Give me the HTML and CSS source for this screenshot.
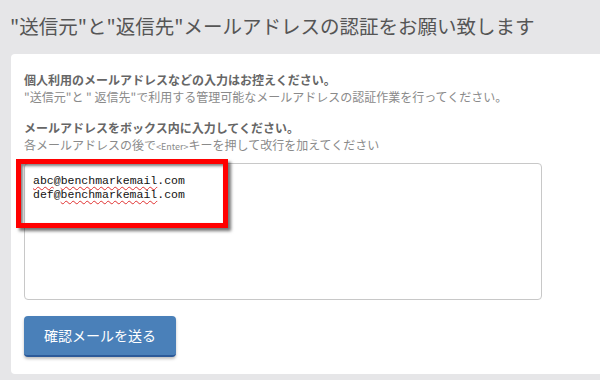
FILE: index.html
```html
<!DOCTYPE html>
<html>
<head>
    <meta charset="UTF-8">
    <title>メールアドレスの認証</title>
    <link rel="stylesheet" href="styles.css">
</head>
<body>

<h1 class="title">"送信元"と"返信先"メールアドレスの認証をお願い致します</h1>

<div class="card">
    <div class="note">
        <p class="note-head">個人利用のメールアドレスなどの入力はお控えください。</p>
        <p class="note-text">"送信元"と " 返信先"で利用する管理可能なメールアドレスの認証作業を行ってください。</p>
    </div>
    <div class="note">
        <p class="note-head">メールアドレスをボックス内に入力してください。</p>
        <p class="note-text">各メールアドレスの後で<span class="key">&lt;Enter&gt;</span>キーを押して改行を加えてください</p>
    </div>

    <div class="field-wrap">
        <div class="field">
            <div><span class="typo">abc</span>@<span class="typo">benchmarkemail</span>.com</div>
            <div>def@<span class="typo">benchmarkemail</span>.com</div>
        </div>
        <div class="mark"></div>
    </div>

    <div class="btn">確認メールを送る</div>
</div>

</body>
</html>
```

FILE: styles.css
```css
body {
    margin: 0;
    background: #e6e6e8;
    font-family: "Noto Sans CJK JP", "Noto Sans", sans-serif;
    color: #555555;
}

.title {
    margin: 0;
    padding: 12px 0 14px 10px;
    font-size: 19.5px;
    line-height: 28px;
    font-weight: 400;
    color: #555555;
    white-space: nowrap;
}

.card {
    margin-left: 11px;
    padding: 17px 13px 17px 13px;
    background: #ffffff;
    border-radius: 4px 0 0 4px;
}

.note {
    margin-bottom: 14px;
}

.note p {
    margin: 0;
    font-size: 12px;
    line-height: 17px;
    white-space: nowrap;
}

.note-head {
    font-weight: 700;
    color: #666666;
}

.note-text {
    color: #8a8a8a;
}

.key {
    font-size: 9px;
}

.field-wrap {
    position: relative;
    width: 518px;
    margin-top: -6px;
}

.field {
    height: 117px;
    padding: 10px 8px 8px 8px;
    border: 1px solid #c8c8c8;
    border-radius: 4px;
    font-family: "Liberation Mono", "DejaVu Sans Mono", monospace;
    font-size: 11.5px;
    line-height: 14px;
    color: #111111;
}

.typo {
    text-decoration: underline wavy #e03030;
    text-decoration-thickness: 1px;
    text-underline-offset: 2px;
}

.mark {
    position: absolute;
    left: -8px;
    top: -4px;
    width: 202px;
    height: 59px;
    border: 5px solid #ff0000;
    box-shadow: 3px 3px 3px rgba(0, 0, 0, 0.55), inset 2px 2px 3px rgba(0, 0, 0, 0.5);
}

.btn {
    margin-top: 16px;
    width: 152px;
    height: 39px;
    line-height: 39px;
    text-align: center;
    background: #4a80b9;
    border-bottom: 2px solid #2c5a99;
    border-radius: 4px;
    color: #ffffff;
    font-size: 14px;
    box-shadow: 0 2px 3px rgba(0, 0, 0, 0.25);
}
```
